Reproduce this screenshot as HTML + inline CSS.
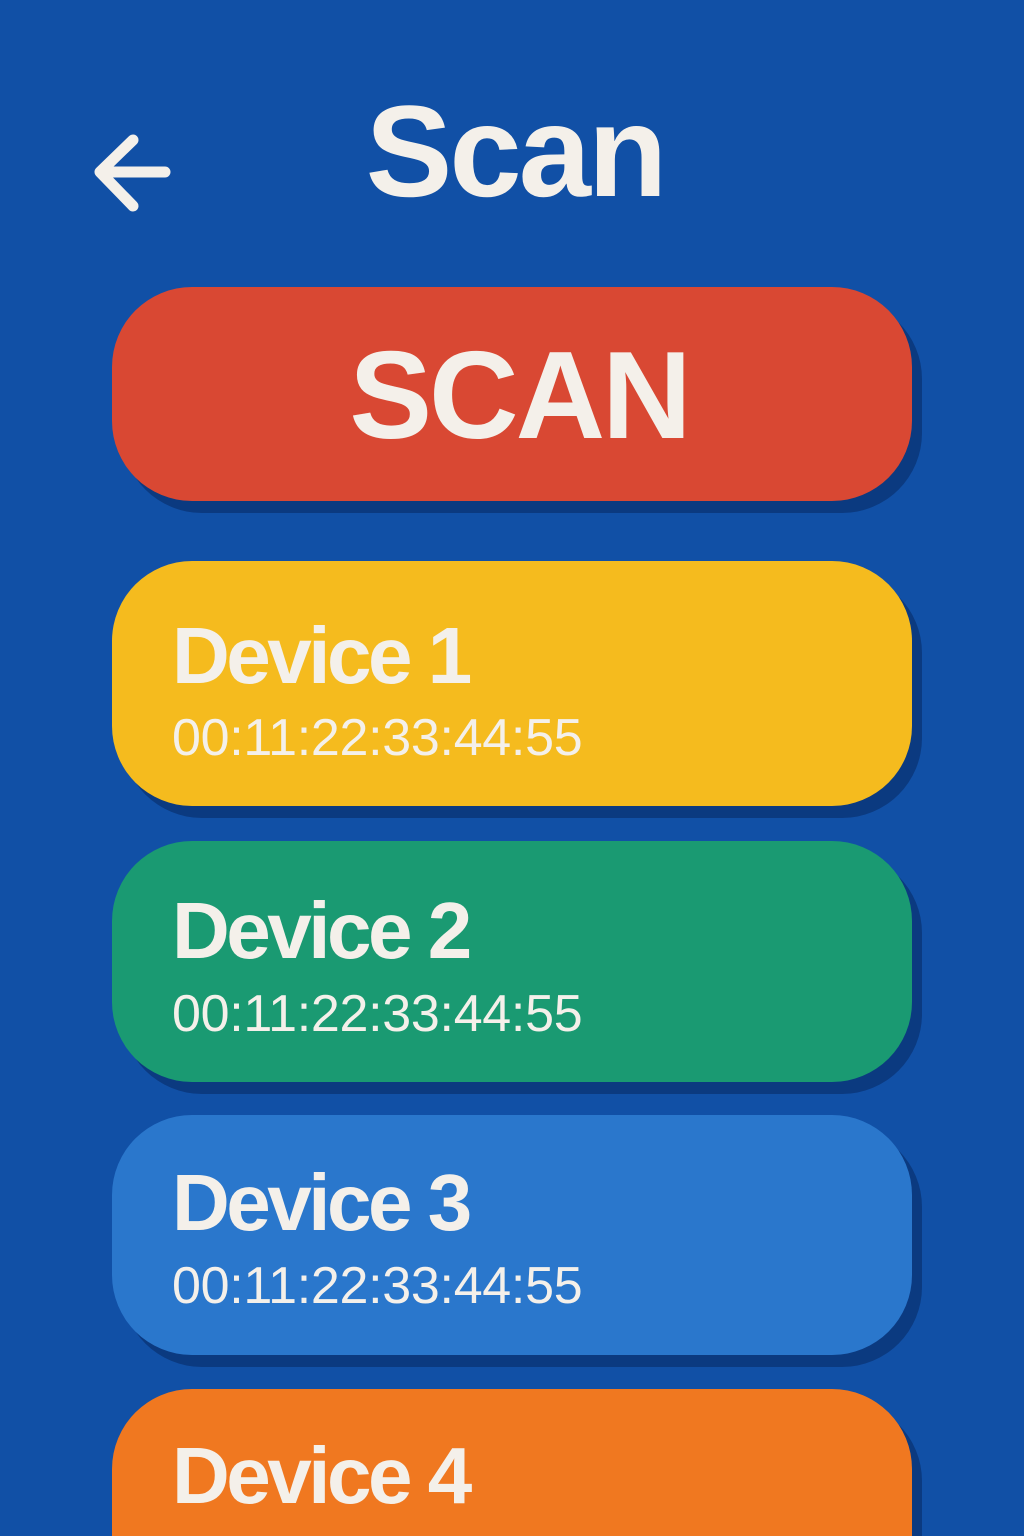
<!DOCTYPE html>
<html><head><meta charset="utf-8"><style>
html,body{margin:0;padding:0;background:#1150a6;width:1024px;height:1536px;overflow:hidden}
svg{display:block}
text{font-family:"Liberation Sans",Arial,sans-serif;fill:#f4f0ea}
</style></head><body>
<svg width="1024" height="1536" viewBox="0 0 1024 1536">
<rect width="1024" height="1536" fill="#1150a6"/>
<path d="M165 172 H100 M133 140 L100 172 L133 206" fill="none" stroke="#f4f0ea" stroke-width="11" stroke-linecap="round" stroke-linejoin="round"/>
<text x="515" y="196" font-size="130" font-weight="bold" text-anchor="middle" letter-spacing="-3">Scan</text>

<rect x="122" y="299" width="800" height="214" rx="80" fill="#0b3a80"/>
<rect x="112" y="287" width="800" height="214" rx="80" fill="#d94833"/>
<text x="519" y="438" font-size="124" font-weight="bold" text-anchor="middle" letter-spacing="-3">SCAN</text>

<rect x="122" y="573" width="800" height="245" rx="80" fill="#0b3a80"/>
<rect x="112" y="561" width="800" height="245" rx="80" fill="#f5bb1e"/>
<text x="172" y="683" font-size="80" font-weight="bold" letter-spacing="-3.5">Device 1</text>
<text x="172" y="755" font-size="52" letter-spacing="-0.3">00:11:22:33:44:55</text>

<rect x="122" y="853" width="800" height="241" rx="80" fill="#0b3a80"/>
<rect x="112" y="841" width="800" height="241" rx="80" fill="#1a9a72"/>
<text x="172" y="958" font-size="80" font-weight="bold" letter-spacing="-3.5">Device 2</text>
<text x="172" y="1031" font-size="52" letter-spacing="-0.3">00:11:22:33:44:55</text>

<rect x="122" y="1127" width="800" height="240" rx="80" fill="#0b3a80"/>
<rect x="112" y="1115" width="800" height="240" rx="80" fill="#2a77cc"/>
<text x="172" y="1230" font-size="80" font-weight="bold" letter-spacing="-3.5">Device 3</text>
<text x="172" y="1303" font-size="52" letter-spacing="-0.3">00:11:22:33:44:55</text>

<path d="M122 1536 V1481 A80 80 0 0 1 202 1401 H842 A80 80 0 0 1 922 1481 V1536 Z" fill="#0b3a80"/>
<path d="M112 1536 V1469 A80 80 0 0 1 192 1389 H832 A80 80 0 0 1 912 1469 V1536 Z" fill="#f07820"/>
<text x="172" y="1503" font-size="80" font-weight="bold" letter-spacing="-3.5">Device 4</text>
</svg>
</body></html>
